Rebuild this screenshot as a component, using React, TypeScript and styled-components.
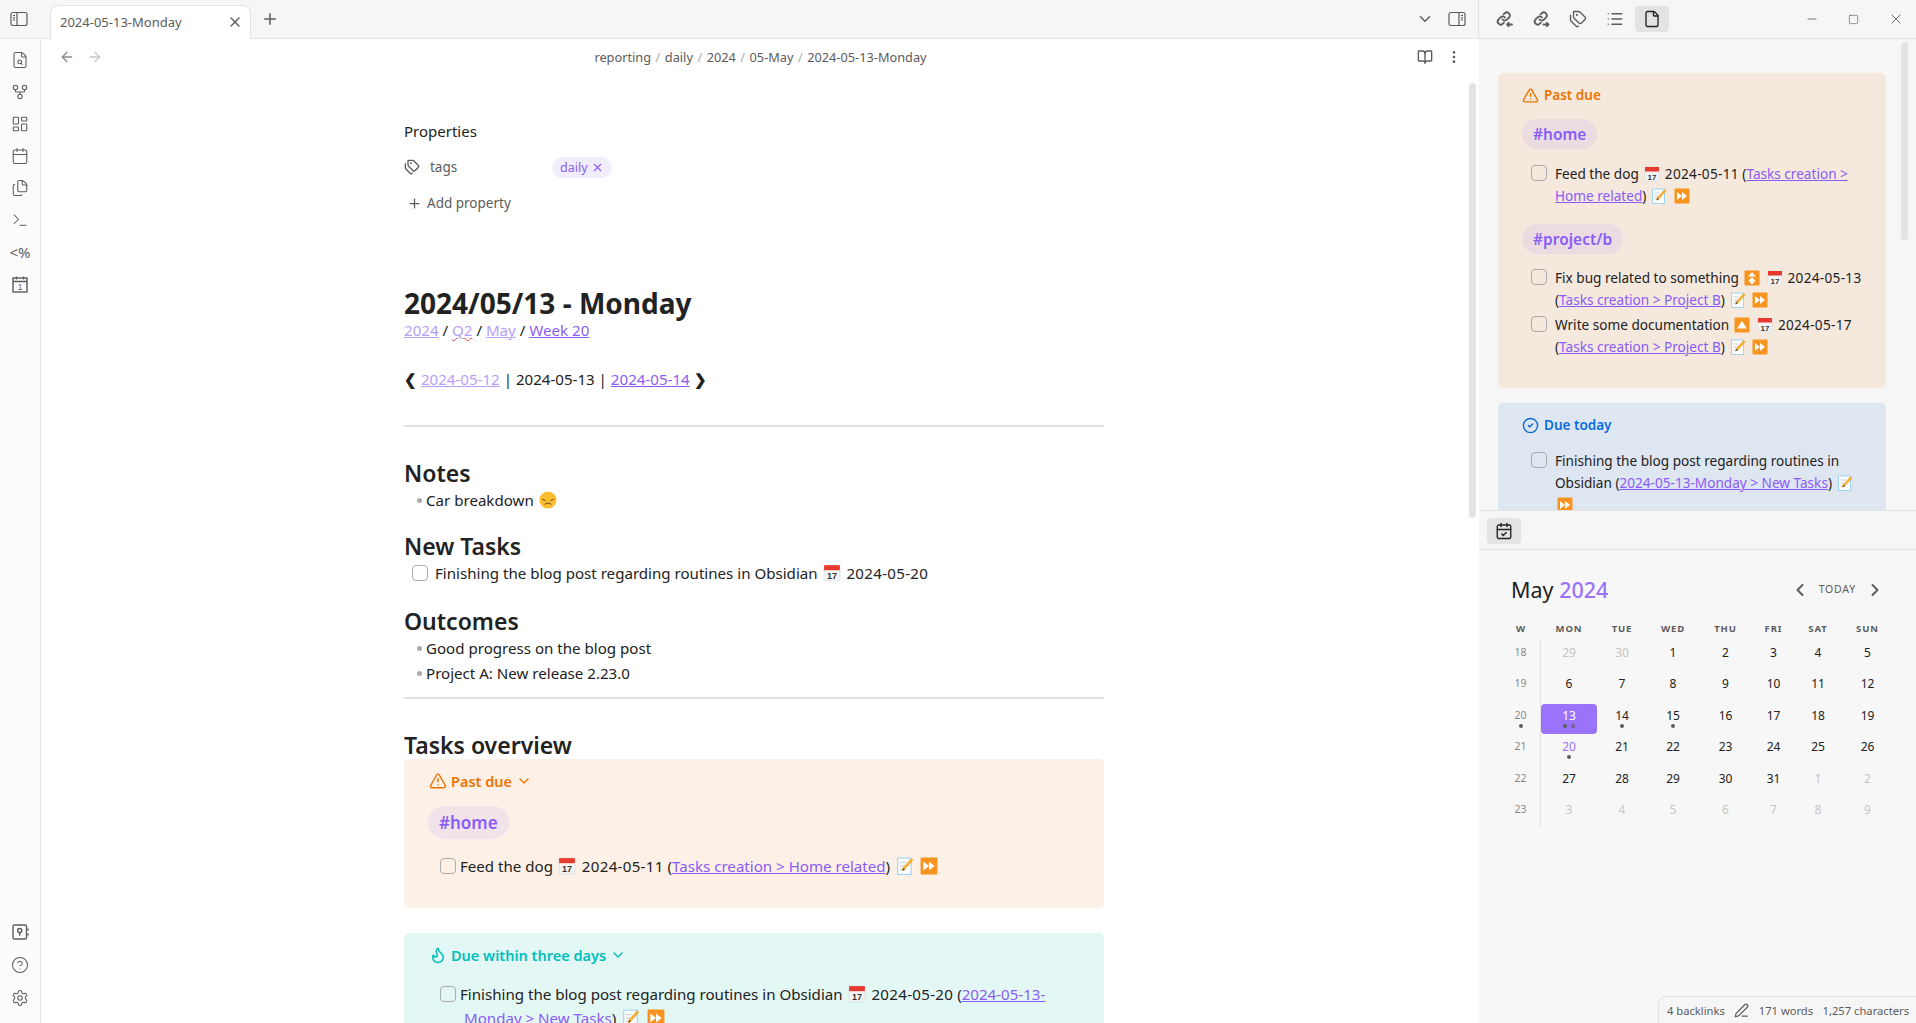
import React from "react";
import styled, { createGlobalStyle } from "styled-components";
import {
  ArrowLeft, ArrowRight, BookOpen, Calendar, CalendarCheck, ChevronDown, ChevronLeft, ChevronRight,
  CircleCheck, CircleHelp, EllipsisVertical, File, Files, FileSearch, Flame, GitFork, LayoutDashboard,
  List, Minus, PenLine, Plus, Settings, Square, Tags, Terminal, TriangleAlert, X,
} from "lucide-react";

const GlobalStyle = createGlobalStyle`
  html, body { margin: 0; padding: 0; height: 100%; overflow: hidden; background: #fff; }
  body { font-family: "Noto Sans", "Open Sans", sans-serif; color: #222; }
  * { box-sizing: border-box; }
`;

// Small drawings for the emoji in the notes
function CalendarEmoji({ size = 16 }: { size?: number }) {
  return (
    <EmojiSvg width={size} height={size} viewBox="0 0 16 16">
      <rect x="1" y="1" width="14" height="14" rx="1" fill="#f4f4f4" stroke="#d5d8dc" strokeWidth="0.6" />
      <rect x="1" y="1" width="14" height="4.5" fill="#e8392f" />
      <text x="8" y="13.6" fontSize="8" fontWeight="700" textAnchor="middle" fill="#333" fontFamily="Liberation Sans">17</text>
    </EmojiSvg>
  );
}

function MemoEmoji({ size = 16 }: { size?: number }) {
  return (
    <EmojiSvg width={size} height={size} viewBox="0 0 16 16">
      <rect x="1.5" y="1" width="12" height="14.5" fill="#fdfdfd" stroke="#9fd4f2" strokeWidth="1" />
      <path d="M3.5 5h5M3.5 8h4M3.5 11h3" stroke="#b9c4cc" strokeWidth="0.8" />
      <path d="M13.5 1.5l1.6 1.4-7.4 8.3-2.4 1 0.8-2.5z" fill="#f6b52e" stroke="#d98a1e" strokeWidth="0.4" />
      <path d="M5.7 12.2l0.8-2.5 1.6 1.4z" fill="#5a4635" />
    </EmojiSvg>
  );
}

function ForwardEmoji({ size = 16 }: { size?: number }) {
  return (
    <EmojiSvg width={size} height={size} viewBox="0 0 16 16">
      <rect x="0.5" y="0.5" width="15" height="15" rx="1" fill="#f7931e" />
      <path d="M3 4l5 4-5 4zM8 4l5 4-5 4z" fill="#fff" />
    </EmojiSvg>
  );
}

function UpEmoji({ size = 16, double = false }: { size?: number; double?: boolean }) {
  return (
    <EmojiSvg width={size} height={size} viewBox="0 0 16 16">
      <rect x="0.5" y="0.5" width="15" height="15" rx="1" fill="#f7931e" />
      {double ? <path d="M8 2l4 4.6H4zM8 7l4 4.6H4zM6.5 11h3v3h-3z" fill="#fff" /> : <path d="M8 4l5 7.5H3z" fill="#fff" />}
    </EmojiSvg>
  );
}

function SadEmoji() {
  return (
    <EmojiSvg width="18" height="18" viewBox="0 0 18 18">
      <circle cx="9" cy="9" r="8.6" fill="#fbbd2e" />
      <path d="M3.6 8.4l2.6 1M14.4 8.4l-2.6 1" stroke="#6b4a1a" strokeWidth="1" strokeLinecap="round" />
      <path d="M6 13.2c1.6-1.6 4.4-1.6 6 0" stroke="#6b4a1a" strokeWidth="1" fill="none" strokeLinecap="round" />
    </EmojiSvg>
  );
}

// Icons that lucide has no match for
function SidebarLeftIcon() {
  return (
    <svg width="18" height="18" viewBox="0 0 18 18" fill="none" stroke="#5c5c5c" strokeWidth="1.2">
      <rect x="1" y="2.5" width="16" height="13" rx="2" />
      <path d="M7 2.5v13M3 5.5h2M3 7.8h2M3 10h2" />
    </svg>
  );
}

function SidebarRightIcon() {
  return (
    <svg width="18" height="18" viewBox="0 0 18 18" fill="none" stroke="#5c5c5c" strokeWidth="1.2">
      <rect x="1" y="2.5" width="16" height="13" rx="2" />
      <path d="M11 2.5v13M13 5.5h2M13 7.8h2M13 10h2" />
    </svg>
  );
}

function LinkArrowIcon({ out = false }: { out?: boolean }) {
  return (
    <svg width="18" height="18" viewBox="0 0 18 18" fill="none" stroke="#5c5c5c" strokeWidth="1.2" strokeLinecap="round" strokeLinejoin="round">
      <path d="M7.5 9.5a3 3 0 0 0 4.4.2l2-2a3 3 0 0 0-4.3-4.3L8.6 4.4" />
      <path d="M10 7.5a3 3 0 0 0-4.4-.2l-2 2a3 3 0 0 0 4.3 4.3l1-1" />
      {out ? <path d="M11.5 14.5h5M14.8 12.8l1.7 1.7-1.7 1.7" /> : <path d="M12 14.5h5M13.7 12.8L12 14.5l1.7 1.7" />}
    </svg>
  );
}

function DailyNoteIcon() {
  return (
    <svg width="18" height="18" viewBox="0 0 18 18" fill="none" stroke="#5c5c5c" strokeWidth="1.1">
      <rect x="2" y="3" width="14" height="14" />
      <path d="M2 6.5h14M5.5 1.5v3M12.5 1.5v3" />
      <text x="9" y="15" fontSize="8.5" textAnchor="middle" fill="#5c5c5c" stroke="none" fontFamily="Liberation Sans">1</text>
    </svg>
  );
}

function SafeIcon() {
  return (
    <svg width="18" height="18" viewBox="0 0 18 18" fill="none" stroke="#5c5c5c" strokeWidth="1.2">
      <rect x="2" y="2" width="13.5" height="14" rx="1.5" />
      <circle cx="8.7" cy="7.6" r="2.1" />
      <path d="M8.7 9.7v3M17 5.5v2M17 10.5v2" />
    </svg>
  );
}

const ribbonTop = [
  <FileSearch size={18} />, <GitFork size={18} />, <LayoutDashboard size={18} />, <Calendar size={18} />,
  <Files size={18} />, <Terminal size={18} />,
];

const weeks = [
  { w: 18, dot: false, days: ["29", "30", "1", "2", "3", "4", "5"], faded: [0, 1] },
  { w: 19, dot: false, days: ["6", "7", "8", "9", "10", "11", "12"], faded: [] },
  { w: 20, dot: true, days: ["13", "14", "15", "16", "17", "18", "19"], faded: [] },
  { w: 21, dot: false, days: ["20", "21", "22", "23", "24", "25", "26"], faded: [] },
  { w: 22, dot: false, days: ["27", "28", "29", "30", "31", "1", "2"], faded: [5, 6] },
  { w: 23, dot: false, days: ["3", "4", "5", "6", "7", "8", "9"], faded: [0, 1, 2, 3, 4, 5, 6] },
];

function Calendar2() {
  return (
    <CalendarPane>
      <CalHead>
        <CalTitle>May <span>2024</span></CalTitle>
        <CalNav>
          <ChevronLeft size={20} strokeWidth={2.4} />
          <TodayLabel>TODAY</TodayLabel>
          <ChevronRight size={20} strokeWidth={2.4} />
        </CalNav>
      </CalHead>
      <CalGrid>
        {["W", "MON", "TUE", "WED", "THU", "FRI", "SAT", "SUN"].map((d) => (
          <CalHeader key={d} $week={d === "W"}>{d}</CalHeader>
        ))}
        {weeks.map((week) => (
          <React.Fragment key={week.w}>
            <WeekCell>
              {week.w}
              {week.dot && <Dot />}
            </WeekCell>
            {week.days.map((d, i) => {
              const selected = week.w === 20 && i === 0;
              const today = week.w === 21 && i === 0;
              const oneDot = (week.w === 20 && (i === 1 || i === 2)) || today;
              return (
                <DayCell key={i} $selected={selected}>
                  <DayNumber $faded={(week.faded as number[]).includes(i)} $selected={selected} $today={today}>{d}</DayNumber>
                  {oneDot && <DotRow><Dot /></DotRow>}
                  {selected && <DotRow><Dot /><Dot $hollow /></DotRow>}
                </DayCell>
              );
            })}
          </React.Fragment>
        ))}
      </CalGrid>
    </CalendarPane>
  );
}

export default function App() {
  return (
    <>
      <GlobalStyle />
      <Shell>
        <LeftColumn>
          <TabBar>
            <TabBarIcon><SidebarLeftIcon /></TabBarIcon>
            <Tab>
              <span>2024-05-13-Monday</span>
              <X size={16} color="#5c5c5c" />
            </Tab>
            <NewTab><Plus size={18} color="#5c5c5c" /></NewTab>
            <TabBarSpacer />
            <ChevronDown size={18} color="#5c5c5c" />
            <RightToggle><SidebarRightIcon /></RightToggle>
          </TabBar>
          <Body>
            <Ribbon>
              <RibbonGroup>
                {ribbonTop.map((icon, i) => <RibbonIcon key={i}>{icon}</RibbonIcon>)}
                <RibbonIcon><TemplaterGlyph>&lt;%</TemplaterGlyph></RibbonIcon>
                <RibbonIcon><DailyNoteIcon /></RibbonIcon>
              </RibbonGroup>
              <RibbonGroup>
                <RibbonIcon $tall><SafeIcon /></RibbonIcon>
                <RibbonIcon $tall><CircleHelp size={18} /></RibbonIcon>
                <RibbonIcon $tall><Settings size={18} /></RibbonIcon>
              </RibbonGroup>
            </Ribbon>
            <MainPane>
              <ViewHeader>
                <HeaderNav>
                  <ArrowLeft size={16} color="#8a8a8a" />
                  <ArrowRight size={16} color="#c8c8c8" />
                </HeaderNav>
                <Crumbs>
                  {["reporting", "daily", "2024", "05-May", "2024-05-13-Monday"].map((c, i) => (
                    <React.Fragment key={c}>
                      {i > 0 && <CrumbSep>/</CrumbSep>}
                      <span>{c}</span>
                    </React.Fragment>
                  ))}
                </Crumbs>
                <HeaderActions>
                  <BookOpen size={16} color="#5c5c5c" />
                  <EllipsisVertical size={16} color="#5c5c5c" />
                </HeaderActions>
              </ViewHeader>
              <ScrollThumb $main />
              <NoteColumn>
                <PropertiesTitle>Properties</PropertiesTitle>
                <PropertyRow>
                  <Tags size={16} color="#5c5c5c" />
                  <PropertyKey>tags</PropertyKey>
                  <PropertyPill>daily <X size={13} /></PropertyPill>
                </PropertyRow>
                <AddProperty><Plus size={15} /> Add property</AddProperty>
                <NoteTitle>2024/05/13 - Monday</NoteTitle>
                <TextLine>
                  <FadedLink>2024</FadedLink> / <FadedLink $squiggle>Q2</FadedLink> / <FadedLink>May</FadedLink> / <Link>Week 20</Link>
                </TextLine>
                <NavLine>
                  <b>❮</b> <FadedLink>2024-05-12</FadedLink> | 2024-05-13 | <Link>2024-05-14</Link> <b>❯</b>
                </NavLine>
                <Rule $top={34} />
                <SectionTitle $top={31}>Notes</SectionTitle>
                <Bullet>Car breakdown <SadEmoji /></Bullet>
                <SectionTitle $top={18}>New Tasks</SectionTitle>
                <PlainTask>
                  <Checkbox />
                  <span>Finishing the blog post regarding routines in Obsidian <CalendarEmoji size={18} /> <DateText>2024-05-20</DateText></span>
                </PlainTask>
                <SectionTitle $top={21}>Outcomes</SectionTitle>
                <Bullet>Good progress on the blog post</Bullet>
                <Bullet>Project A: New release 2.23.0</Bullet>
                <Rule $top={11} />
                <SectionTitle $top={31}>Tasks overview</SectionTitle>
                <Callout $bg="#fdf0e6">
                  <CalloutTitle $color="#ec7500">
                    <TriangleAlert size={18} /> Past due <ChevronDown size={16} />
                  </CalloutTitle>
                  <HashPill $bg="#f2e3ea">#home</HashPill>
                  <NoteTask>
                    <Checkbox />
                    <NoteTaskText>Feed the dog <CalendarEmoji size={18} /> <DateText>2024-05-11</DateText> (<Link>Tasks creation &gt; Home related</Link>) <MemoEmoji size={18} /> <ForwardEmoji size={18} /></NoteTaskText>
                  </NoteTask>
                </Callout>
                <Callout $bg="#e3f7f5" $top={25}>
                  <CalloutTitle $color="#00bfbc">
                    <Flame size={18} /> Due within three days <ChevronDown size={16} />
                  </CalloutTitle>
                  <NoteTask>
                    <Checkbox />
                    <NoteTaskText>Finishing the blog post regarding routines in Obsidian <CalendarEmoji size={18} /> <DateText>2024-05-20</DateText> (<Link>2024-05-13-Monday &gt; New Tasks</Link>) <MemoEmoji size={18} /> <ForwardEmoji size={18} /></NoteTaskText>
                  </NoteTask>
                </Callout>
              </NoteColumn>
            </MainPane>
          </Body>
        </LeftColumn>
        <Sidebar>
          <SideTop>
            <SideTabs>
              <SideTab><LinkArrowIcon /></SideTab>
              <SideTab><LinkArrowIcon out /></SideTab>
              <SideTab><Tags size={18} /></SideTab>
              <SideTab><List size={18} /></SideTab>
              <SideTab $active><File size={18} /></SideTab>
            </SideTabs>
            <WindowButtons>
              <Minus size={14} />
              <Square size={11} />
              <X size={16} />
            </WindowButtons>
          </SideTop>
          <SideUpper>
            <ScrollThumb />
            <SideCallout $bg="#f5e8dd">
              <SideCalloutTitle $color="#ec7500"><TriangleAlert size={17} /> Past due</SideCalloutTitle>
              <SidePill>#home</SidePill>
              <SideTask $top={14}>
                <Checkbox />
                <span>Feed the dog <CalendarEmoji /> <DateText>2024-05-11</DateText> (<Link>Tasks creation &gt; Home related</Link>) <MemoEmoji /> <ForwardEmoji /></span>
              </SideTask>
              <SidePill $top={17}>#project/b</SidePill>
              <SideTask $top={13}>
                <Checkbox />
                <span>Fix bug related to something <UpEmoji double /> <CalendarEmoji /> <DateText>2024-05-13</DateText> (<Link>Tasks creation &gt; Project B</Link>) <MemoEmoji /> <ForwardEmoji /></span>
              </SideTask>
              <SideTask>
                <Checkbox />
                <span>Write some documentation <UpEmoji /> <CalendarEmoji /> <DateText>2024-05-17</DateText> (<Link>Tasks creation &gt; Project B</Link>) <MemoEmoji /> <ForwardEmoji /></span>
              </SideTask>
            </SideCallout>
            <SideCallout $bg="#dee6f2" $top={15}>
              <SideCalloutTitle $color="#086ddd"><CircleCheck size={17} /> Due today</SideCalloutTitle>
              <SideTask $top={13}>
                <Checkbox />
                <span>Finishing the blog post regarding routines in Obsidian (<Link>2024-05-13-Monday &gt; New Tasks</Link>) <MemoEmoji /> <ForwardEmoji /></span>
              </SideTask>
            </SideCallout>
          </SideUpper>
          <LowerTabs>
            <SideTab $active><CalendarCheck size={18} /></SideTab>
          </LowerTabs>
          <Calendar2 />
        </Sidebar>
        <StatusBar>
          <span>4 backlinks</span>
          <PenLine size={15} />
          <span>171 words</span>
          <span>1,257 characters</span>
        </StatusBar>
      </Shell>
    </>
  );
}

const Shell = styled.div`
  display: flex;
  width: 1916px;
  height: 1023px;
  overflow: hidden;
  position: relative;
  font-size: 15px;
`;

const LeftColumn = styled.div`
  width: 1479px;
  display: flex;
  flex-direction: column;
  flex: none;
`;

const TabBar = styled.div`
  height: 39px;
  flex: none;
  display: flex;
  align-items: center;
  background: #f6f6f6;
  border-bottom: 1px solid #e3e3e3;
  padding-right: 13px;
`;

const TabBarIcon = styled.div`
  width: 38px;
  height: 38px;
  flex: none;
  display: flex;
  align-items: center;
  justify-content: center;
`;

const Tab = styled.div`
  width: 201px;
  height: 34px;
  margin: 5px 0 -1px 12px;
  padding: 0 7px 2px 9px;
  display: flex;
  align-items: center;
  justify-content: space-between;
  background: #fff;
  border: 1px solid #e3e3e3;
  border-bottom: none;
  border-radius: 8px 8px 0 0;
  font-size: 13px;
  color: #5c5c5c;
  flex: none;
`;

const NewTab = styled.div`
  margin-left: 10px;
  display: flex;
`;

const TabBarSpacer = styled.div`
  flex: 1;
`;

const RightToggle = styled.div`
  display: flex;
  margin-left: 14px;
`;

const Body = styled.div`
  flex: 1;
  display: flex;
  min-height: 0;
`;

const Ribbon = styled.div`
  width: 41px;
  flex: none;
  display: flex;
  flex-direction: column;
  justify-content: space-between;
  padding: 5px 0 9px;
  background: #fbfbfb;
  border-right: 1px solid #e3e3e3;
`;

const RibbonGroup = styled.div`
  display: flex;
  flex-direction: column;
`;

const RibbonIcon = styled.div<{ $tall?: boolean }>`
  height: ${(p) => (p.$tall ? 33 : 32)}px;
  display: flex;
  align-items: center;
  justify-content: center;
  color: #5c5c5c;
  & svg { stroke-width: 1.4; }
`;

const TemplaterGlyph = styled.span`
  font-size: 15px;
  color: #5c5c5c;
`;

const MainPane = styled.div`
  flex: 1;
  background: #fff;
  position: relative;
  overflow: hidden;
`;

const ViewHeader = styled.div`
  height: 36px;
  display: grid;
  grid-template-columns: 1fr auto 1fr;
  align-items: center;
  padding: 0 17px 0 18px;
`;

const HeaderNav = styled.div`
  display: flex;
  gap: 12px;
`;

const Crumbs = styled.div`
  display: flex;
  gap: 4.5px;
  font-size: 12.75px;
  color: #5c5c5c;
`;

const CrumbSep = styled.span`
  color: #ababab;
`;

const HeaderActions = styled.div`
  display: flex;
  gap: 13px;
  justify-content: flex-end;
`;

const ScrollThumb = styled.div<{ $main?: boolean }>`
  position: absolute;
  top: ${(p) => (p.$main ? 44 : 3)}px;
  right: ${(p) => (p.$main ? 3 : 8)}px;
  width: 7px;
  height: ${(p) => (p.$main ? 435 : 198)}px;
  border-radius: 4px;
  background: #e3e3e3;
`;

const NoteColumn = styled.div`
  width: 700px;
  margin-left: 363px;
  padding-top: 44px;
  font-size: 15.1px;
  color: #222;
`;

const PropertiesTitle = styled.div`
  line-height: 24px;
  font-size: 15px;
`;

const PropertyRow = styled.div`
  margin-top: 9px;
  height: 30px;
  display: flex;
  align-items: center;
  font-size: 13.5px;
  color: #5c5c5c;
`;

const PropertyKey = styled.span`
  margin-left: 10px;
  width: 122px;
`;

const PropertyPill = styled.span`
  height: 21px;
  padding: 0 8px;
  display: inline-flex;
  align-items: center;
  gap: 3px;
  border-radius: 11px;
  background: #f1edfd;
  color: #8a5cf5;
  font-size: 12.5px;
`;

const AddProperty = styled.div`
  margin-top: 6px;
  height: 30px;
  padding-left: 3px;
  display: flex;
  align-items: center;
  gap: 5px;
  font-size: 13.5px;
  color: #5c5c5c;
`;

const NoteTitle = styled.h1`
  margin: 70px 0 0;
  font-size: 28px;
  line-height: 30px;
  font-weight: 700;
`;

const TextLine = styled.div`
  line-height: 24px;
`;

const NavLine = styled.div`
  margin-top: 25px;
  line-height: 24px;
`;

const Link = styled.span`
  color: #8a5cf5;
  text-decoration: underline;
  text-decoration-thickness: 1px;
`;

const FadedLink = styled.span<{ $squiggle?: boolean }>`
  color: #b79dfa;
  text-decoration: underline;
  text-decoration-thickness: 1px;
  text-decoration-color: ${(p) => (p.$squiggle ? "#e0444a" : "#b79dfa")};
  text-decoration-style: ${(p) => (p.$squiggle ? "wavy" : "solid")};
`;

const DateText = styled.span`
  letter-spacing: 0.3px;
`;

const Rule = styled.div<{ $top: number }>`
  margin-top: ${(p) => p.$top}px;
  height: 2px;
  background: #e0e0e0;
`;

const SectionTitle = styled.h2<{ $top: number }>`
  margin: ${(p) => p.$top}px 0 0;
  font-size: 23px;
  line-height: 30px;
  font-weight: 600;
  color: #222;
`;

const Bullet = styled.div`
  height: 25px;
  line-height: 24px;
  padding-left: 22px;
  position: relative;
  &::before {
    content: "";
    position: absolute;
    left: 13px;
    top: 10px;
    width: 5px;
    height: 5px;
    border-radius: 50%;
    background: #ababab;
  }
`;

const EmojiSvg = styled.svg`
  display: inline-block;
  vertical-align: -3px;
  margin: 0 1.5px;
`;

const Checkbox = styled.span`
  flex: none;
  display: inline-block;
  width: 16px;
  height: 16px;
  border: 1px solid #ababab;
  border-radius: 4px;
`;

const PlainTask = styled.div`
  height: 24px;
  display: flex;
  align-items: center;
  gap: 7px;
  padding-left: 8px;
`;

const Callout = styled.div<{ $bg: string; $top?: number }>`
  margin-top: ${(p) => p.$top ?? -1}px;
  min-height: 149px;
  padding: 10px 24px 20px 25px;
  background: ${(p) => p.$bg};
  border-radius: 5px;
`;

const CalloutTitle = styled.div<{ $color: string }>`
  height: 24px;
  display: flex;
  align-items: center;
  gap: 4px;
  font-weight: 600;
  font-size: 14.5px;
  color: ${(p) => p.$color};
`;

const HashPill = styled.span<{ $bg: string }>`
  display: inline-block;
  margin: 13px 0 0 -1px;
  height: 33px;
  line-height: 33px;
  padding: 0 11px;
  border-radius: 17px;
  background: ${(p) => p.$bg};
  color: #8a5cf5;
  font-size: 17px;
  font-weight: 600;
`;

const NoteTask = styled.div`
  margin-top: 15px;
  padding-left: 11px;
  display: flex;
  line-height: 24px;
  & > ${Checkbox} { margin-top: 4px; }
`;

const NoteTaskText = styled.span`
  padding-left: 8px;
  text-indent: -4px;
`;

const Sidebar = styled.div`
  flex: 1;
  display: flex;
  flex-direction: column;
  border-left: 1px solid #e3e3e3;
  background: #f6f6f6;
  margin-left: -1px;
  min-width: 0;
`;

const SideTop = styled.div`
  height: 39px;
  flex: none;
  display: flex;
  align-items: center;
  justify-content: space-between;
  border-bottom: 1px solid #e3e3e3;
  padding: 0 12px 0 8px;
`;

const SideTabs = styled.div`
  display: flex;
  gap: 3px;
`;

const SideTab = styled.div<{ $active?: boolean }>`
  width: 34px;
  height: 26px;
  display: flex;
  align-items: center;
  justify-content: center;
  border-radius: 4px;
  color: ${(p) => (p.$active ? "#222" : "#5c5c5c")};
  background: ${(p) => (p.$active ? "#e3e3e3" : "transparent")};
  & > svg { stroke-width: 1.8; }
`;

const WindowButtons = styled.div`
  display: flex;
  align-items: center;
  gap: 29px;
  color: #5c5c5c;
  & > svg { stroke-width: 1.4; }
`;

const SideUpper = styled.div`
  height: 471px;
  flex: none;
  padding: 34px 30px 0 19px;
  position: relative;
  overflow: hidden;
  font-size: 13.6px;
`;

const SideCallout = styled.div<{ $bg: string; $top?: number }>`
  margin-top: ${(p) => p.$top ?? 0}px;
  padding: 10px 24px 30px 24px;
  background: ${(p) => p.$bg};
  border-radius: 5px;
`;

const SideCalloutTitle = styled.div<{ $color: string }>`
  height: 24px;
  display: flex;
  align-items: center;
  gap: 5px;
  font-weight: 600;
  font-size: 13.5px;
  color: ${(p) => p.$color};
`;

const SidePill = styled.span<{ $top?: number }>`
  display: table;
  margin-top: ${(p) => p.$top ?? 12}px;
  height: 30px;
  line-height: 30px;
  padding: 0 11px;
  border-radius: 15px;
  background: #ebdce2;
  color: #8a5cf5;
  font-size: 15.5px;
  font-weight: 600;
`;

const SideTask = styled.div<{ $top?: number }>`
  margin-top: ${(p) => p.$top ?? 3}px;
  padding: 0 0 0 9px;
  display: flex;
  gap: 8px;
  line-height: 22px;
  & > ${Checkbox} { margin-top: 2px; }
`;

const LowerTabs = styled.div`
  height: 40px;
  flex: none;
  padding: 7px 8px;
  border-top: 1px solid #e3e3e3;
  border-bottom: 1px solid #e3e3e3;
`;

const CalendarPane = styled.div`
  flex: 1;
  background: #f7f7f7;
  padding: 18px 0 0 24px;
`;

const CalHead = styled.div`
  width: 391px;
  height: 51px;
  padding: 5px 9px 0 8px;
  display: flex;
  align-items: flex-start;
  justify-content: space-between;
`;

const CalTitle = styled.div`
  font-size: 21.5px;
  line-height: 34px;
  color: #222;
  & > span { color: #9b72fa; font-weight: 500; }
`;

const CalNav = styled.div`
  display: flex;
  align-items: center;
  gap: 9px;
  height: 34px;
  color: #5c5c5c;
`;

const TodayLabel = styled.span`
  font-size: 10.5px;
  letter-spacing: 0.8px;
  margin-top: -2px;
`;

const CalGrid = styled.div`
  display: grid;
  width: 391px;
  grid-template-columns: 38px 56px 50px 52px 53px 43px 46px 53px;
  grid-template-rows: 19.5px;
  grid-auto-rows: 31.5px;
`;

const CalHeader = styled.div<{ $week?: boolean }>`
  height: 20px;
  padding-right: ${(p) => (p.$week ? 2 : 0)}px;
  text-align: center;
  font-size: 9.5px;
  font-weight: 700;
  letter-spacing: 0.9px;
  line-height: 20px;
  color: #5c5c5c;
`;

const WeekCell = styled.div`
  padding-right: 2px;
  font-size: 10.5px;
  line-height: 27px;
  color: #8a8a8a;
  border-right: 1px solid #e3e3e3;
  display: flex;
  flex-direction: column;
  align-items: center;
  & > span { margin-top: -5px; }
`;

const DayCell = styled.div<{ $selected?: boolean }>`
  margin: 2px 0 0;
  height: 30px;
  padding-top: 2px;
  display: flex;
  flex-direction: column;
  align-items: center;
  border-radius: 4px;
  background: ${(p) => (p.$selected ? "#9b72fa" : "transparent")};
`;

const DayNumber = styled.span<{ $faded?: boolean; $selected?: boolean; $today?: boolean }>`
  font-size: 12px;
  line-height: 19px;
  color: ${(p) => (p.$selected ? "#fff" : p.$today ? "#9b72fa" : p.$faded ? "#c6c6c6" : "#222")};
`;

const DotRow = styled.div`
  display: flex;
  gap: 4px;
  margin-top: -1px;
`;

const Dot = styled.span<{ $hollow?: boolean }>`
  width: 4px;
  height: 4px;
  border-radius: 50%;
  background: ${(p) => (p.$hollow ? "transparent" : "#5c5c5c")};
  border: ${(p) => (p.$hollow ? "1px solid #5c5c5c" : "none")};
`;

const StatusBar = styled.div`
  position: absolute;
  right: 0;
  bottom: 0;
  width: 258px;
  height: 27px;
  padding: 0 7px 0 8px;
  display: flex;
  align-items: center;
  justify-content: space-between;
  background: #f6f6f6;
  border: 1px solid #e3e3e3;
  border-width: 1px 0 0 1px;
  border-radius: 8px 0 0 0;
  font-size: 11.2px;
  color: #5c5c5c;
`;
